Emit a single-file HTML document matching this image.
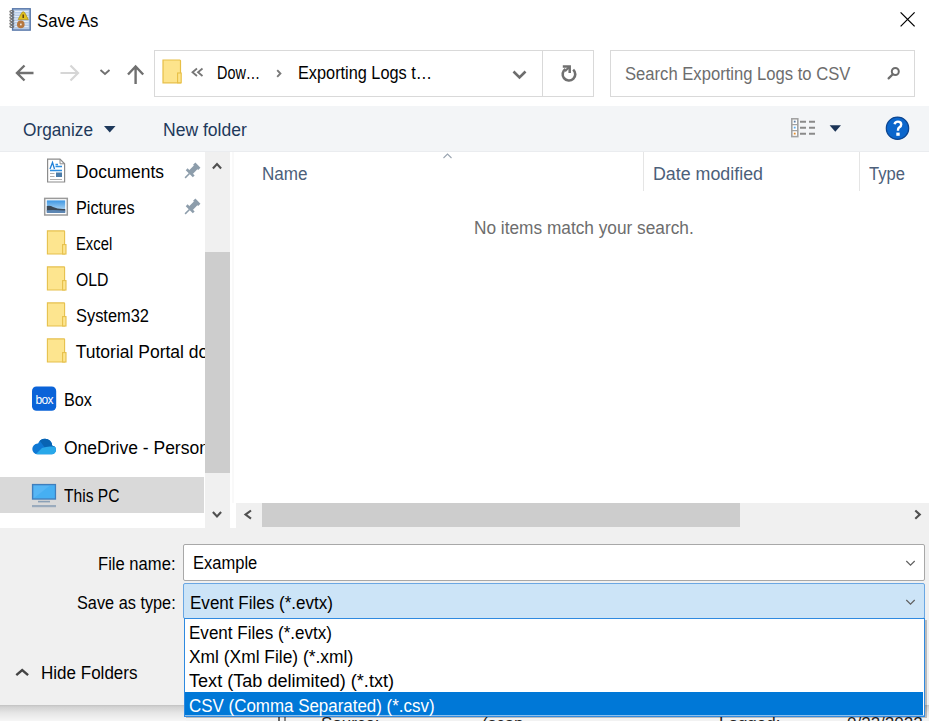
<!DOCTYPE html>
<html><head><meta charset="utf-8">
<style>
*{box-sizing:border-box;margin:0;padding:0}
html,body{width:929px;height:721px;overflow:hidden;background:#fff}
body{position:relative;font-family:"Liberation Sans",sans-serif;font-size:17.5px;color:#000}
.a{position:absolute;white-space:nowrap;line-height:1}
.t{transform-origin:0 0}
.clip{overflow:hidden}
svg{position:absolute;overflow:visible}
</style></head><body>

<!-- background window peeking at bottom -->
<div class="a" style="left:0;top:705px;width:929px;height:16px;background:linear-gradient(#c2c2c2,#d2d2d2 12%,#e6e6e6 50%,#f6f6f6 100%)"></div>
<div class="a" style="left:186px;top:716.5px;width:743px;height:4.5px;background:#f2f2f2"></div>
<div class="a clip" style="left:0;top:717px;width:929px;height:4px">
  <div class="a" style="left:278px;top:0;width:2px;height:4px;background:#666"></div>
  <div class="a" style="left:284px;top:0;width:2px;height:4px;background:#888"></div>
  <div class="a" style="left:321px;top:-2px;font-size:17px;color:#222">Source:</div>
  <div class="a" style="left:482px;top:-2px;font-size:17px;color:#222">(scan</div>
  <div class="a" style="left:719px;top:-2px;font-size:17px;color:#222">Logged:</div>
  <div class="a" style="left:847px;top:-2px;font-size:17px;color:#222">0/22/2022</div>
</div>

<!-- dialog -->
<div class="a" style="left:0;top:0;width:929px;height:705px;background:#fff"></div>

<!-- title icon -->
<svg style="left:0;top:0" width="40" height="40">
  <rect x="12.6" y="8.8" width="17.6" height="21.3" fill="#b7cbe6" stroke="#5576a8" stroke-width="1.4"/>
  <path d="M14.5 11.5H28.5M14.5 14H28.5M14.5 16.5H28.5M14.5 19H28.5M14.5 21.5H28.5M14.5 24H28.5M14.5 26.5H28.5" stroke="#e4edf8" stroke-width="1.2"/>
  <g fill="none" stroke="#707070" stroke-width="1.1"><ellipse cx="11.8" cy="11.5" rx="2" ry="1"/><ellipse cx="11.8" cy="14.5" rx="2" ry="1"/><ellipse cx="11.8" cy="17.5" rx="2" ry="1"/><ellipse cx="11.8" cy="20.5" rx="2" ry="1"/><ellipse cx="11.8" cy="23.5" rx="2" ry="1"/><ellipse cx="11.8" cy="26.5" rx="2" ry="1"/></g>
  <path d="M23.2 11.8Q24.5 11.8 25.5 14L28.3 19.6H18.2L21 14Q22 11.8 23.2 11.8Z" fill="#e2c21e" stroke="#a88a12" stroke-width=".7"/>
  <path d="M23.2 14.5v3.5" stroke="#5b3e14" stroke-width="1.5"/>
  <circle cx="20.8" cy="24.4" r="3.8" fill="#b5773f"/>
  <rect x="20" y="23.6" width="1.7" height="1.7" fill="#f0e4d6"/>
</svg>

<!-- close -->
<svg style="left:0;top:0" width="929" height="40"><path d="M900.6 12.4L914.6 26.4M914.6 12.4L900.6 26.4" stroke="#000" stroke-width="1.25"/></svg>

<!-- nav row icons -->
<svg style="left:0;top:0" width="600" height="100">
  <path d="M33.5 73H17.5M24.5 65.5L17 73L24.5 80.5" fill="none" stroke="#707070" stroke-width="2.4"/>
  <path d="M60.5 73H77M70.5 65.5L78 73L70.5 80.5" fill="none" stroke="#d6d6d6" stroke-width="2.2"/>
  <path d="M100.5 70L105 74L109.5 70" fill="none" stroke="#707070" stroke-width="1.8"/>
  <path d="M135.6 84V67M128 74.5L135.6 66.5L143.2 74.5" fill="none" stroke="#707070" stroke-width="2.4"/>
  <!-- address folder -->
  <path d="M163 60H179.8A0.8 0.8 0 0 1 180.5 60.8V82.8H163Z" fill="#fde48c" stroke="#e7bf46" stroke-width="1.2"/>
  <rect x="177.6" y="73" width="3.6" height="9.8" fill="#fde48c" stroke="#e7bf46" stroke-width="1.1"/>
  <path d="M197 68.5L192.5 72.2L197 76M202.5 68.5L198 72.2L202.5 76" fill="none" stroke="#777" stroke-width="1.8"/>
  <path d="M277.2 70.2L280.4 73.5L277.2 76.8" fill="none" stroke="#7a7a7a" stroke-width="1.9"/>
  <path d="M513.5 71.5L519.5 77.5L525.5 71.5" fill="none" stroke="#6d6d6d" stroke-width="2.6"/>
  <!-- refresh -->
  <path d="M573.2 69.6A6.3 6.3 0 1 1 565.5 69" fill="none" stroke="#707070" stroke-width="2.6"/>
  <path d="M562.8 66.5H569.7V73" fill="none" stroke="#707070" stroke-width="2.5"/>
  <path d="M569.2 67L565 71.2" stroke="#707070" stroke-width="2"/>
</svg>
<div class="a" style="left:154px;top:50px;width:440px;height:47px;border:1px solid #d9d9d9"></div>
<div class="a" style="left:542px;top:50px;width:1px;height:47px;background:#d9d9d9"></div>
<div class="a" style="left:610px;top:50px;width:305px;height:47px;border:1px solid #d9d9d9"></div>
<svg style="left:0;top:0" width="929" height="100">
  <circle cx="895.3" cy="71.5" r="3.5" fill="none" stroke="#6d6d6d" stroke-width="2"/>
  <path d="M892.8 74.2L888.6 78.4" stroke="#6d6d6d" stroke-width="2.2" stroke-linecap="round"/>
</svg>

<!-- toolbar -->
<div class="a" style="left:0;top:106px;width:929px;height:46px;background:#f3f5f7;border-bottom:1px solid #eaecef"></div>
<svg style="left:0;top:0" width="929" height="160">
  <path d="M104 126H115.5L109.75 132.5Z" fill="#1e395b"/>
  <path d="M829.6 125.2H841L835.3 131.8Z" fill="#1b3457"/>
  <rect x="791.8" y="118.8" width="6" height="17.8" fill="#fff" stroke="#a2a2a2" stroke-width="1.6"/>
  <path d="M791.6 124.7H797.8M791.6 130.7H797.8" stroke="#a2a2a2" stroke-width="1.3"/>
  <rect x="793.8" y="120.7" width="1.8" height="1.8" fill="#5d7fa6"/>
  <rect x="793.8" y="126.7" width="1.8" height="1.8" fill="#5aaef2"/>
  <rect x="793.8" y="132.7" width="1.8" height="1.8" fill="#e08a2a"/>
  <path d="M800 121.7H806M809 121.7H815M800 127.7H806M809 127.7H815M800 133.8H806M809 133.8H815" stroke="#8a8a8a" stroke-width="2"/>
  <circle cx="897.5" cy="128.25" r="11.2" fill="#0b66cc" stroke="#0c4590" stroke-width="1.2"/>
  <path d="M894.6 124.3Q895 121.6 897.9 121.6Q901.2 121.6 901.2 124.4Q901.2 126.4 899.3 127.4Q898 128.1 898 130V130.8" fill="none" stroke="#fff" stroke-width="2.4"/>
  <rect x="896.3" y="132.6" width="3.4" height="3.2" fill="#fff"/>
</svg>

<!-- nav pane icons -->
<svg style="left:0;top:0" width="240" height="530">
  <!-- documents -->
  <path d="M47.6 159.2H60L64.6 163.8V182H47.6Z" fill="#fff" stroke="#8c8c8c" stroke-width="1.2"/>
  <path d="M60 159.2V163.8H64.6" fill="none" stroke="#8c8c8c" stroke-width="1"/>
  <path d="M50 169L52.5 162.5L54.5 169" fill="none" stroke="#1e7fd8" stroke-width="1.3"/>
  <path d="M55.5 164.5H58M55.5 166.5H62M50 170.5H62" stroke="#2f8fe0" stroke-width="1.3"/>
  <path d="M50 173.5H54.5M50 176.5H54.5M50 179.5H62" stroke="#b0b0b0" stroke-width="1.2"/>
  <rect x="56" y="172.5" width="6" height="4.5" fill="#4b7ca8"/>
  <!-- pictures -->
  <defs><linearGradient id="sky" x1="0" y1="0" x2="0" y2="1"><stop offset="0" stop-color="#3d97e3"/><stop offset="1" stop-color="#cfe6f7"/></linearGradient></defs>
  <rect x="44.7" y="198.4" width="22.6" height="16.6" fill="#fff" stroke="#9a9a9a" stroke-width="1.5"/>
  <rect x="46.8" y="200.4" width="18.4" height="12.6" fill="url(#sky)"/>
  <path d="M46.8 206Q50 205 53 207Q58 209.5 65.2 209V211.5H46.8Z" fill="#3b4754"/>
  <path d="M46.8 210.2Q55 209.8 65.2 210.5V213H46.8Z" fill="#5c86b3"/>
  <!-- pins -->
  <g id="pin" transform="translate(190.2 172.8) rotate(45)" fill="#8d9dab">
    <rect x="-5" y="-1.3" width="10" height="2.6"/><rect x="-2.6" y="-8.2" width="5.2" height="7.5"/><rect x="-3.6" y="-10.9" width="7.2" height="3.2"/><rect x="-0.75" y="1" width="1.5" height="6.2"/>
  </g>
  <use href="#pin" y="36"/>
  <!-- folders -->
  <g id="fo">
    <path d="M47.4 230.9H64A0.6 0.6 0 0 1 64.6 231.5V254H47.4Z" fill="#fde58f" stroke="#e6c04c" stroke-width="1.1"/>
    <rect x="62.6" y="244.6" width="3.4" height="9.4" fill="#fde58f" stroke="#e6c04c" stroke-width="1.1"/>
  </g>
  <use href="#fo" y="36"/>
  <use href="#fo" y="72"/>
  <use href="#fo" y="108"/>
  <!-- box -->
  <rect x="32" y="386.5" width="24.2" height="24.2" rx="4.5" fill="#0a63d8"/>
  <text x="44.1" y="404" font-family="Liberation Sans" font-size="12" fill="#fff" text-anchor="middle" letter-spacing="-0.7">box</text>
  <!-- onedrive -->
  <defs><clipPath id="cl"><circle cx="37.6" cy="448.9" r="5.3"/><circle cx="45" cy="446" r="7.3"/><circle cx="51.8" cy="450" r="4.2"/><rect x="37.6" y="449" width="14.2" height="5.2"/></clipPath></defs>
  <g clip-path="url(#cl)">
    <rect x="30" y="436" width="30" height="20" fill="#0f78d4"/>
    <path d="M36 436H60V447L46 449Z" fill="#0864b4"/>
    <path d="M34 456L42 448Q46 446.5 50 446.5H60V456Z" fill="#28a8ea"/>
  </g>
</svg>

<!-- nav pane selection & scrollbars -->
<div class="a" style="left:0;top:477px;width:204px;height:35.5px;background:#d9d9d9"></div>
<svg style="left:0;top:0" width="240" height="530">
  <rect x="32.6" y="484.6" width="22.8" height="14.4" fill="#56b6f5" stroke="#3e7ebd" stroke-width="1.4"/>
  <path d="M34 498L50 485.5H55V498Z" fill="#3caaf0" opacity=".6"/>
  <rect x="38" y="500.8" width="12" height="1.6" fill="#8aa0b6"/>
  <rect x="32" y="505" width="24" height="2.2" fill="#9aabbd"/>
</svg>
<div class="a" style="left:205px;top:152px;width:25px;height:375.5px;background:#f0f0f0"></div>
<div class="a" style="left:205px;top:252px;width:24.5px;height:220.5px;background:#cdcdcd"></div>
<div class="a" style="left:232px;top:152px;width:2px;height:351px;background:#f9f9f9"></div>


<!-- content -->
<div class="a" style="left:643px;top:152px;width:1px;height:39px;background:#e5e5e5"></div>
<div class="a" style="left:859px;top:152px;width:1px;height:39px;background:#e5e5e5"></div>
<div class="a" style="left:236px;top:503px;width:693px;height:24.5px;background:#f0f0f0"></div>
<div class="a" style="left:261.5px;top:503px;width:478.5px;height:24px;background:#cdcdcd"></div>
<svg style="left:0;top:0" width="929" height="530">
  <path d="M212.9 168.5L217 164L221.1 168.5" fill="none" stroke="#505050" stroke-width="2.1"/>
  <path d="M212.9 512L217 516.5L221.1 512" fill="none" stroke="#505050" stroke-width="2.1"/>
  <path d="M251 510.5L245.5 514.6L251 518.7" fill="none" stroke="#505050" stroke-width="2.1"/>
  <path d="M915.3 510.5L919.8 514.6L915.3 518.7" fill="none" stroke="#505050" stroke-width="2.1"/>
  <path d="M443.5 158L447.5 154L451.5 158" fill="none" stroke="#9aa5b1" stroke-width="1.1"/>
</svg>

<!-- bottom panel -->
<div class="a" style="left:0;top:527.5px;width:929px;height:177.5px;background:#f0f0f0"></div>
<div class="a" style="left:183px;top:544px;width:742px;height:37px;background:#fff;border:1px solid #a8a8a8;border-radius:2px"></div>
<div class="a" style="left:183px;top:583px;width:742px;height:36px;background:#cce4f7;border:1px solid #6aa7e3;border-radius:2px"></div>
<svg style="left:0;top:0" width="929" height="721">
  <path d="M906.3 561L910.5 565.2L914.7 561" fill="none" stroke="#606060" stroke-width="1.2"/>
  <path d="M906.3 600L910.5 604.2L914.7 600" fill="none" stroke="#606060" stroke-width="1.2"/>
  <path d="M16.3 675.2L22.2 670L28.1 675.2" fill="none" stroke="#444" stroke-width="2.4"/>
</svg>

<!-- dropdown list -->
<div class="a" style="left:186px;top:620px;width:741px;height:97.5px;background:rgba(0,0,0,.22)"></div>
<div class="a" style="left:184px;top:618px;width:741px;height:98.5px;background:#fff;border:1px solid #2f8ae0"></div>
<div class="a" style="left:185px;top:714.5px;width:739px;height:1px;background:#8cc0ee"></div>
<div class="a" style="left:185px;top:691.8px;width:738px;height:23px;background:#0078d7"></div>

<div class="a t" style="left:37.00px;top:13.19px;color:#000;transform:scaleX(0.9545)">Save As</div>
<div class="a t" style="left:216.70px;top:65.19px;color:#000;transform:scaleX(0.8226)">Dow…</div>
<div class="a t" style="left:297.80px;top:65.19px;color:#000;transform:scaleX(0.9308)">Exporting Logs t…</div>
<div class="a t" style="left:624.50px;top:66.49px;color:#6d6d6d;transform:scaleX(0.9496)">Search Exporting Logs to CSV</div>
<div class="a t" style="left:23.20px;top:122.19px;color:#1e395b;transform:scaleX(0.9857)">Organize</div>
<div class="a t" style="left:163.10px;top:122.19px;color:#1e395b;transform:scaleX(1.0029)">New folder</div>
<div class="a t" style="left:75.70px;top:164.19px;color:#000;transform:scaleX(0.9942)">Documents</div>
<div class="a t" style="left:75.70px;top:200.19px;color:#000;transform:scaleX(0.9285)">Pictures</div>
<div class="a t" style="left:75.70px;top:236.19px;color:#000;transform:scaleX(0.8459)">Excel</div>
<div class="a t" style="left:75.70px;top:272.19px;color:#000;transform:scaleX(0.9032)">OLD</div>
<div class="a t" style="left:75.70px;top:308.19px;color:#000;transform:scaleX(0.9382)">System32</div>
<div class="a clip" style="left:0;top:0;width:205px;height:527px"><div class="a t" style="left:75.70px;top:344.19px;color:#000;transform:scaleX(1.0000)">Tutorial Portal docs</div></div>
<div class="a t" style="left:64.00px;top:392.19px;color:#000;transform:scaleX(0.9285)">Box</div>
<div class="a clip" style="left:0;top:0;width:205px;height:527px"><div class="a t" style="left:64.00px;top:440.19px;color:#000;transform:scaleX(1.0000)">OneDrive - Personal</div></div>
<div class="a t" style="left:63.50px;top:488.19px;color:#000;transform:scaleX(0.8902)">This PC</div>
<div class="a t" style="left:262.00px;top:165.69px;color:#4c607a;transform:scaleX(0.9767)">Name</div>
<div class="a t" style="left:652.80px;top:166.19px;color:#4c607a;transform:scaleX(1.0187)">Date modified</div>
<div class="a t" style="left:869.00px;top:166.19px;color:#4c607a;transform:scaleX(0.9459)">Type</div>
<div class="a t" style="left:473.50px;top:219.79px;color:#6d6d6d;transform:scaleX(0.9864)">No items match your search.</div>
<div class="a t" style="left:98.10px;top:555.89px;color:#000;transform:scaleX(0.9486)">File name:</div>
<div class="a t" style="left:192.50px;top:555.19px;color:#000;transform:scaleX(0.9443)">Example</div>
<div class="a t" style="left:76.90px;top:595.19px;color:#000;transform:scaleX(0.9307)">Save as type:</div>
<div class="a t" style="left:189.50px;top:595.19px;color:#000;transform:scaleX(0.9737)">Event Files (*.evtx)</div>
<div class="a t" style="left:189.10px;top:625.29px;color:#000;transform:scaleX(0.9737)">Event Files (*.evtx)</div>
<div class="a t" style="left:189.10px;top:649.39px;color:#000;transform:scaleX(0.9936)">Xml (Xml File) (*.xml)</div>
<div class="a t" style="left:189.10px;top:673.49px;color:#000;transform:scaleX(1.0333)">Text (Tab delimited) (*.txt)</div>
<div class="a t" style="left:189.10px;top:697.59px;color:#fff;transform:scaleX(0.9676)">CSV (Comma Separated) (*.csv)</div>
<div class="a t" style="left:40.80px;top:665.39px;color:#000;transform:scaleX(0.9726)">Hide Folders</div>

</body></html>
